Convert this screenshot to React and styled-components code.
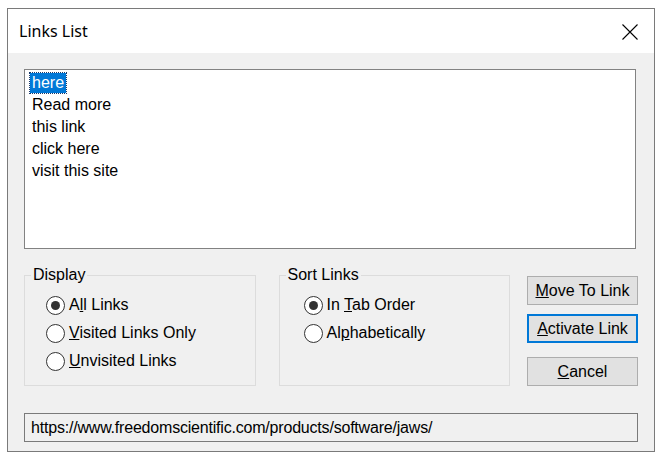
import styled, { createGlobalStyle } from 'styled-components'

const GlobalStyle = createGlobalStyle`
  html, body {
    margin: 0;
    background: #ffffff;
  }
  body {
    font-family: "Liberation Sans", Arial, sans-serif;
    font-size: 16px;
    color: #000;
  }
`

const links = ['here', 'Read more', 'this link', 'click here', 'visit this site']

function Radio({ checked, children }) {
  return (
    <RadioRow>
      <RadioCircle $checked={checked} />
      <span>{children}</span>
    </RadioRow>
  )
}

function App() {
  return (
    <>
      <GlobalStyle />
      <Page>
        <Window>
          <TitleBar>
            <Title>Links List</Title>
            <CloseButton aria-label="Close">
              <svg width="16" height="16" viewBox="0 0 16 16">
                <path d="M0.5 0.5 L15.5 15.5 M15.5 0.5 L0.5 15.5" stroke="#000" strokeWidth="1.1" fill="none" />
              </svg>
            </CloseButton>
          </TitleBar>

          <Body>
            <ListBox>
              {links.map((l, i) => (
                <ListItem key={l}>
                  <ItemText $selected={i === 0}>{l}</ItemText>
                </ListItem>
              ))}
            </ListBox>

            <MiddleRow>
              <Group>
                <Legend>Display</Legend>
                <RadioList $indent={21}>
                  <Radio checked>A<u>l</u>l Links</Radio>
                  <Radio><u>V</u>isited Links Only</Radio>
                  <Radio><u>U</u>nvisited Links</Radio>
                </RadioList>
              </Group>

              <Group>
                <Legend>Sort Links</Legend>
                <RadioList $indent={24}>
                  <Radio checked>In <u>T</u>ab Order</Radio>
                  <Radio>Al<u>p</u>habetically</Radio>
                </RadioList>
              </Group>

              <Buttons>
                <Button><u>M</u>ove To Link</Button>
                <Button $default><u>A</u>ctivate Link</Button>
                <Button $gap><u>C</u>ancel</Button>
              </Buttons>
            </MiddleRow>

            <UrlField>https://www.freedomscientific.com/products/software/jaws/</UrlField>
          </Body>
        </Window>
      </Page>
    </>
  )
}

export default App

// styled-components
const Page = styled.div`
  padding: 8px 0 0 7px;
`

const Window = styled.div`
  width: 648px;
  height: 444px;
  box-sizing: border-box;
  border: 1px solid #7a7a7a;
  display: flex;
  flex-direction: column;
  background: #f0f0f0;
`

const TitleBar = styled.div`
  height: 44px;
  background: #ffffff;
  display: flex;
  align-items: center;
  justify-content: space-between;
  padding: 0 16px 0 11px;
`

const Title = styled.div`
  font-family: "Noto Sans", "Open Sans", sans-serif;
  font-size: 16px;
`

const CloseButton = styled.div`
  width: 16px;
  height: 16px;
  display: flex;
  margin-top: 1px;
`

const Body = styled.div`
  flex: 1;
  padding: 16px 16px 0 16px;
  display: flex;
  flex-direction: column;
`

const ListBox = styled.div`
  height: 180px;
  width: 612px;
  box-sizing: border-box;
  border: 1px solid #828282;
  background: #ffffff;
  padding: 3px 0 0 5px;
`

const ListItem = styled.div`
  height: 22px;
  line-height: 20px;
`

const ItemText = styled.span`
  display: inline-block;
  padding: 0 2px 0 2px;
  height: 20px;
  background: ${(p) => (p.$selected ? '#0078d7' : 'transparent')};
  color: ${(p) => (p.$selected ? '#ffffff' : '#000000')};
  outline: ${(p) => (p.$selected ? '1px dotted #1a3a6a' : 'none')};
`

const MiddleRow = styled.div`
  display: flex;
  margin-top: 18px;
  height: 121px;
`

const Group = styled.fieldset`
  width: 232px;
  box-sizing: border-box;
  margin: -1px 23px 0 0;
  border: 1px solid #dcdcdc;
  padding: 7px 0 0 0;
  height: 120px;

  & + & {
    margin-right: 17px;
  }
`

const Legend = styled.legend`
  padding: 0 2px;
  margin-left: 6px;
  line-height: 18px;
`

const RadioList = styled.div`
  display: flex;
  flex-direction: column;
  padding-left: ${(p) => p.$indent}px;
`

const RadioRow = styled.div`
  display: flex;
  align-items: center;
  gap: 4px;
  height: 28px;
`

const RadioCircle = styled.span`
  width: 19px;
  height: 19px;
  box-sizing: border-box;
  border-radius: 50%;
  border: 1px solid #333333;
  background: #ffffff;
  display: flex;
  align-items: center;
  justify-content: center;

  &::after {
    content: '';
    width: 9px;
    height: 9px;
    border-radius: 50%;
    background: ${(p) => (p.$checked ? '#333333' : 'transparent')};
  }
`

const Buttons = styled.div`
  display: flex;
  flex-direction: column;
  gap: 9px;
  padding-top: 9px;
`

const Button = styled.div`
  width: 111px;
  height: 29px;
  box-sizing: border-box;
  background: #e1e1e1;
  border: ${(p) => (p.$default ? '2px solid #0078d7' : '1px solid #adadad')};
  display: flex;
  align-items: center;
  justify-content: center;
  margin-top: ${(p) => (p.$gap ? '5px' : '0')};
`

const UrlField = styled.div`
  margin-top: 25px;
  width: 614px;
  height: 29px;
  box-sizing: border-box;
  border: 1px solid #7a7a7a;
  background: #f0f0f0;
  padding-left: 6px;
  letter-spacing: -0.2px;
  display: flex;
  align-items: center;
`
